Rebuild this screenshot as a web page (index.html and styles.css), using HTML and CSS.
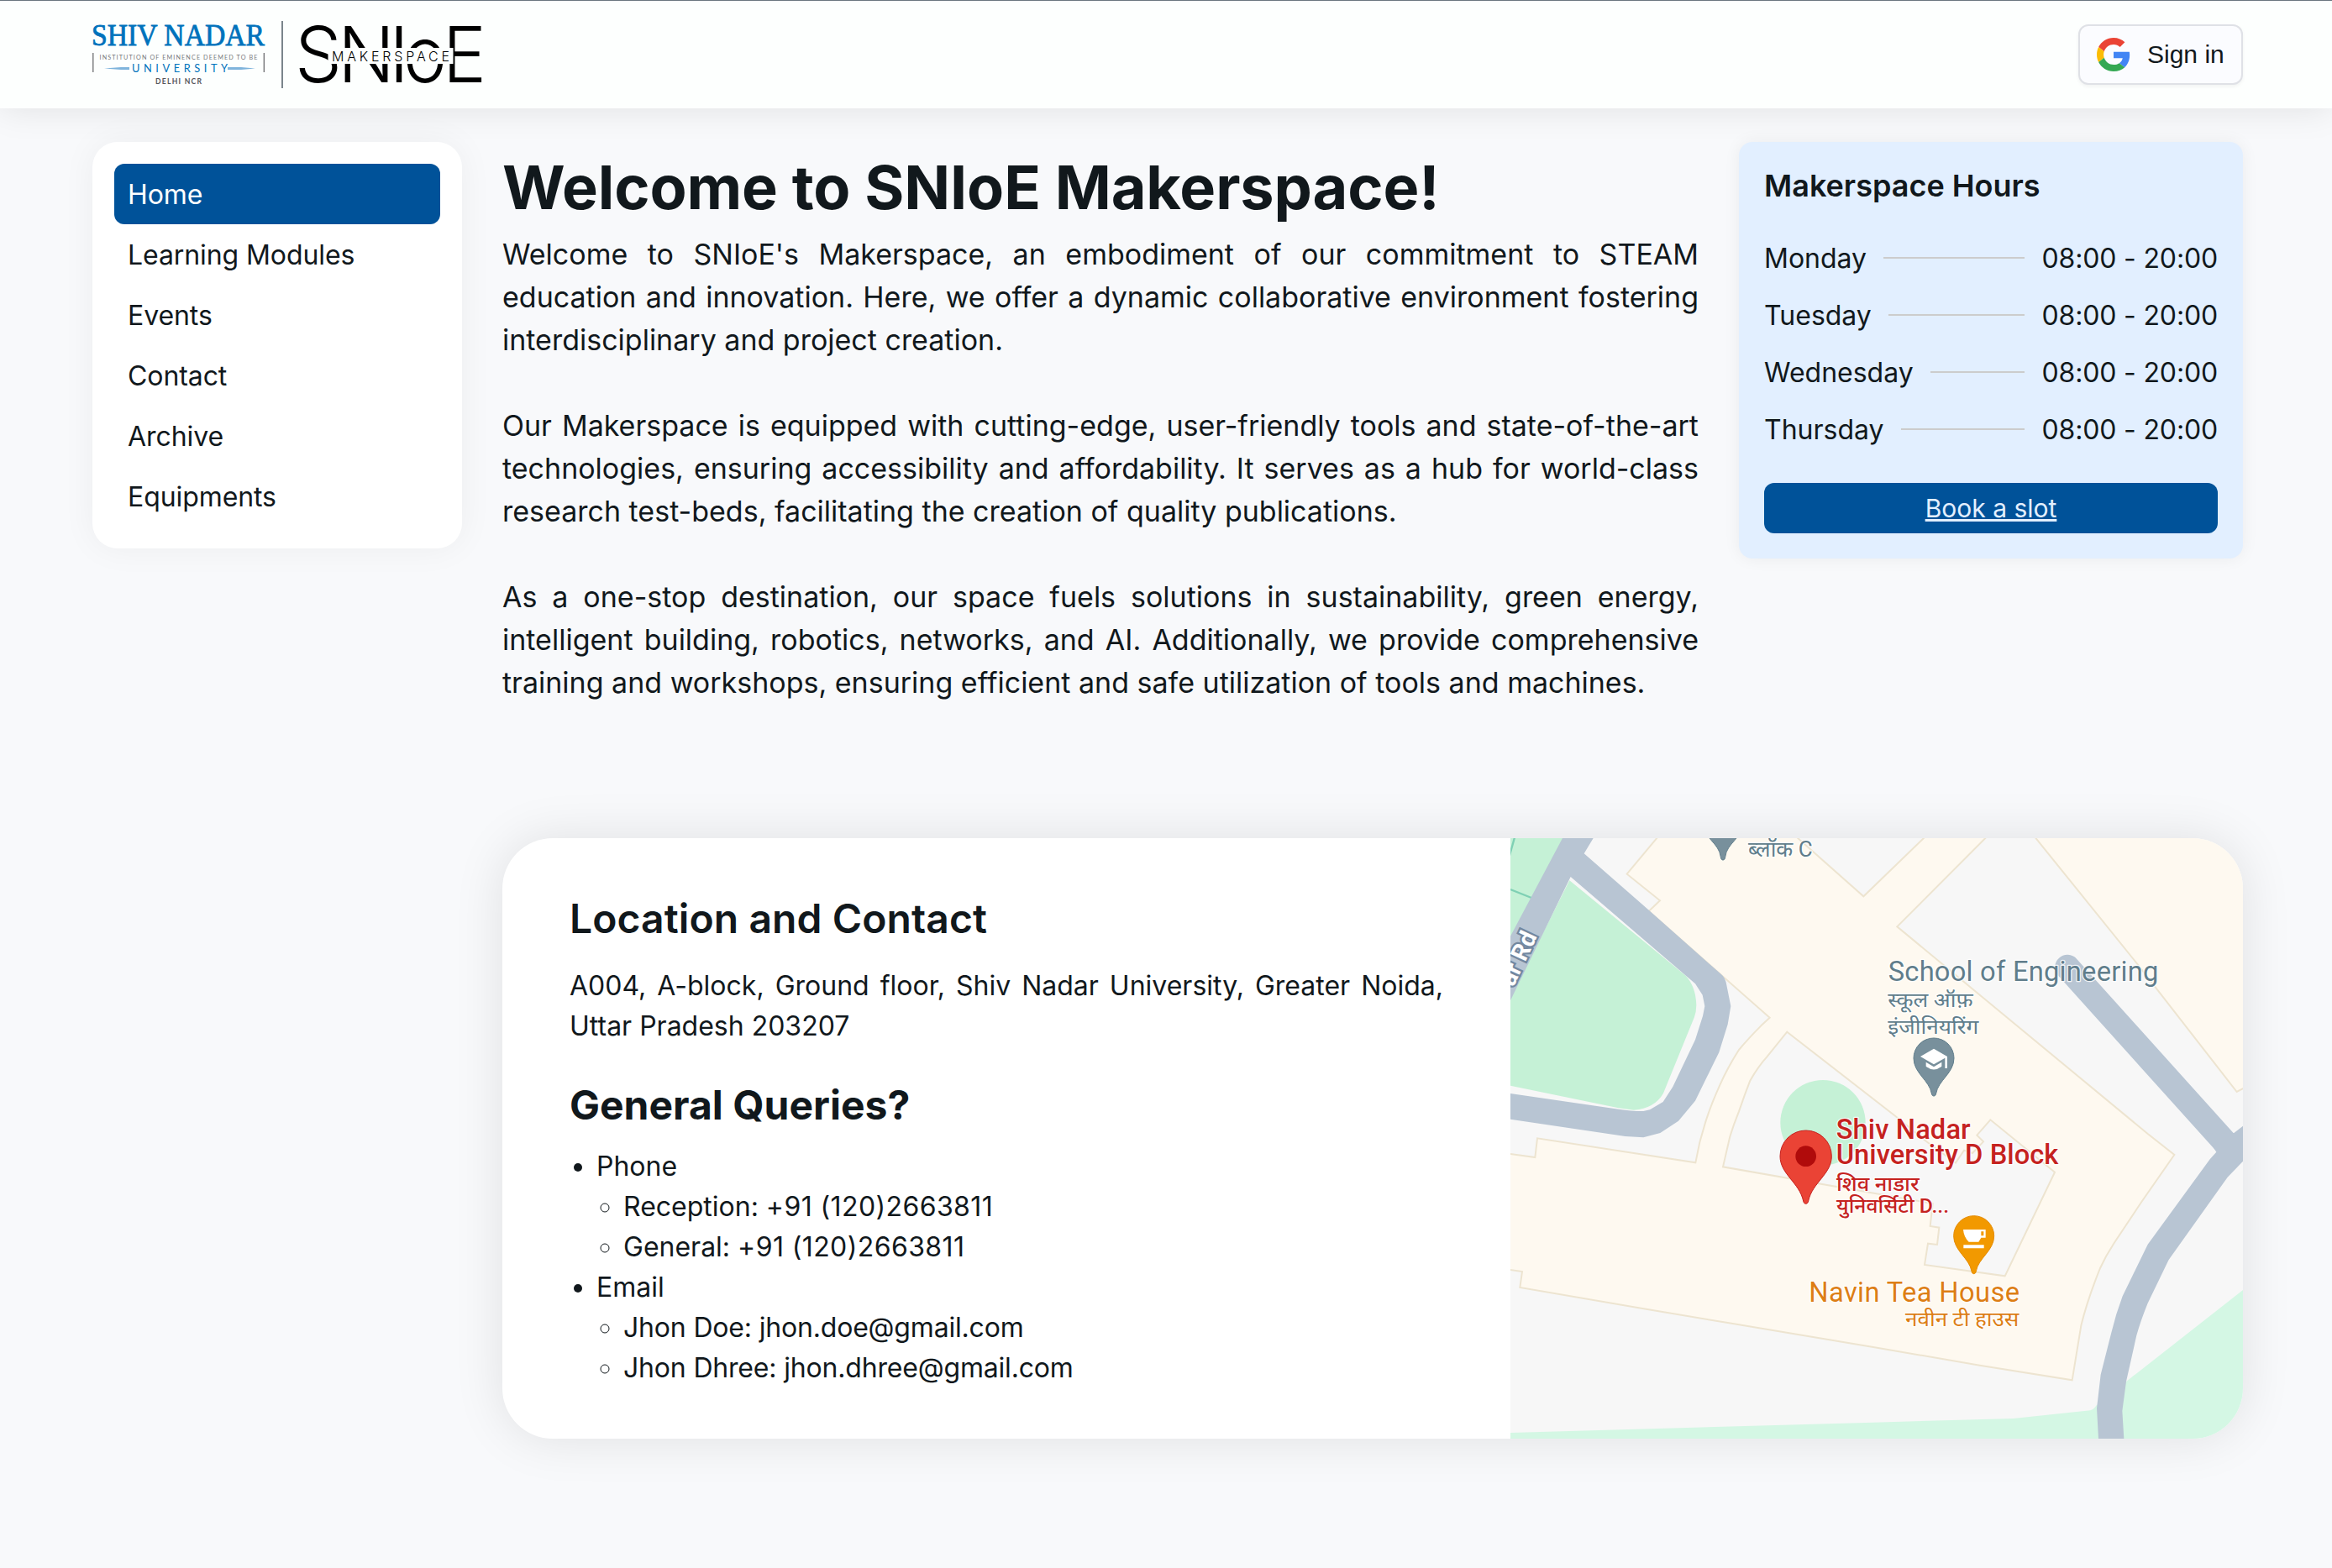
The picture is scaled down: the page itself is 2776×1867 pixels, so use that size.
FILE: index.html
```html
<!DOCTYPE html>
<html lang="en">
<head>
<meta charset="utf-8">
<title>SNIoE Makerspace</title>
<link rel="stylesheet" href="styles.css">
</head>
<body>
<header class="topbar">
  <div class="brand">
    <svg class="logo-university" viewBox="0 0 206 80" role="img" aria-label="Shiv Nadar University">
      <text class="logo-name" x="-1" y="28.500" textLength="206" lengthAdjust="spacingAndGlyphs">SHIV NADAR</text>
      <path class="logo-bracket" d="M.8 38v23M204.300 38v23"/>
      <text class="logo-tag" x="8.500" y="46.200" textLength="188">INSTITUTION OF EMINENCE DEEMED TO BE</text>
      <path class="logo-swash" d="M14 56.500l20-1.600h10v3.200H34zM161 54.900h16l17 1.600-17 1.600h-16z"/>
      <text class="logo-univ" x="47" y="61" textLength="114">UNIVERSITY</text>
      <text class="logo-city" x="75" y="75" textLength="55">DELHI NCR</text>
    </svg>
    <span class="brand-divider"></span>
    <svg class="logo-makerspace" viewBox="0 0 218 80" role="img" aria-label="SNIoE Makerspace">
      <g class="logo-letters">
        <text x="-6" y="73" textLength="56" lengthAdjust="spacingAndGlyphs">S</text>
        <text x="45" y="73" textLength="68" lengthAdjust="spacingAndGlyphs">N</text>
        <text x="106" y="73">I</text>
        <text x="123" y="73" textLength="52" lengthAdjust="spacingAndGlyphs">o</text>
        <text x="170" y="73" textLength="52" lengthAdjust="spacingAndGlyphs">E</text>
      </g>
      <rect class="logo-band" x="33.500" y="32" width="149" height="19"/>
      <text class="logo-sub" x="38" y="48" textLength="140">MAKERSPACE</text>
    </svg>
  </div>
  <button class="signin" type="button">
    <svg class="google" viewBox="0 0 48 48" aria-hidden="true">
      <path fill="#EA4335" d="M24 9.500c3.540 0 6.710 1.220 9.210 3.600l6.850-6.850C35.900 2.380 30.470 0 24 0 14.620 0 6.510 5.380 2.560 13.220l7.980 6.190C12.430 13.720 17.740 9.500 24 9.500z"/>
      <path fill="#4285F4" d="M46.980 24.550c0-1.570-.15-3.090-.38-4.550H24v9.020h12.940c-.58 2.960-2.260 5.480-4.780 7.180l7.730 6c4.510-4.180 7.090-10.360 7.090-17.650z"/>
      <path fill="#FBBC05" d="M10.530 28.590c-.48-1.450-.76-2.990-.76-4.590s.27-3.140.76-4.590l-7.980-6.190C.92 16.460 0 20.120 0 24c0 3.880.92 7.540 2.560 10.780l7.970-6.190z"/>
      <path fill="#34A853" d="M24 48c6.480 0 11.930-2.130 15.890-5.810l-7.730-6c-2.150 1.450-4.920 2.300-8.160 2.300-6.260 0-11.570-4.220-13.470-9.910l-7.980 6.190C6.510 42.620 14.620 48 24 48z"/>
    </svg>
    <span>Sign in</span>
  </button>
</header>

<div class="page">
  <nav class="sidebar">
    <a class="nav-item active">Home</a>
    <a class="nav-item">Learning Modules</a>
    <a class="nav-item">Events</a>
    <a class="nav-item">Contact</a>
    <a class="nav-item">Archive</a>
    <a class="nav-item">Equipments</a>
  </nav>

  <main class="content">
    <div class="intro-row">
      <section class="intro">
        <h1>Welcome to SNIoE Makerspace!</h1>
        <p>Welcome to SNIoE's Makerspace, an embodiment of our commitment to STEAM education and innovation. Here, we offer a dynamic collaborative environment fostering interdisciplinary and project creation.</p>
        <p>Our Makerspace is equipped with cutting-edge, user-friendly tools and state-of-the-art technologies, ensuring accessibility and affordability. It serves as a hub for world-class research test-beds, facilitating the creation of quality publications.</p>
        <p>As a one-stop destination, our space fuels solutions in sustainability, green energy, intelligent building, robotics, networks, and AI. Additionally, we provide comprehensive training and workshops, ensuring efficient and safe utilization of tools and machines.</p>
      </section>
      <aside class="hours">
        <h2>Makerspace Hours</h2>
        <div class="hours-list">
          <div class="hours-row"><span>Monday</span><i></i><span class="time">08:00 - 20:00</span></div>
          <div class="hours-row"><span>Tuesday</span><i></i><span class="time">08:00 - 20:00</span></div>
          <div class="hours-row"><span>Wednesday</span><i></i><span class="time">08:00 - 20:00</span></div>
          <div class="hours-row"><span>Thursday</span><i></i><span class="time">08:00 - 20:00</span></div>
        </div>
        <a class="book">Book a slot</a>
      </aside>
    </div>

    <section class="location">
      <div class="location-text">
        <h2 class="location-title">Location and Contact</h2>
        <p>A004, A-block, Ground floor, Shiv Nadar University, Greater Noida, Uttar Pradesh 203207</p>
        <h2 class="queries-title">General Queries?</h2>
        <ul>
          <li>Phone
            <ul class="phones">
              <li>Reception: <span>+91 (120)2663811</span></li>
              <li>General: <span>+91 (120)2663811</span></li>
            </ul>
          </li>
          <li>Email
            <ul class="emails">
              <li>Jhon Doe: jhon.doe@gmail.com</li>
              <li>Jhon Dhree: jhon.dhree@gmail.com</li>
            </ul>
          </li>
        </ul>
      </div>
      <svg class="map" viewBox="0 0 2616 2145" preserveAspectRatio="none" role="img" aria-label="Map">
        <rect width="2616" height="2145" fill="#f7f7f7"/>
        <!-- lawns -->
        <path fill="#c5f1d6" d="M0 0H190L0 360zM211 151L626 491Q662 530 664 596Q664 620 656 641L546 911Q515 965 441 971L386 964L0 884V570z"/>
        <path class="lawn-line" d="M-4 65L16 -6M0 183L75 213"/>
        <ellipse fill="#c5f1d6" cx="1116" cy="1016" rx="152" ry="152"/>
        <path fill="#d4f7e4" d="M2616 1614L2199 1941L2093 2026Q2082 2042 2071 2044L1796 2073L1296 2087L0 2124V2145H2616z"/>
        <!-- buildings -->
        <path class="building" fill-rule="evenodd" d="M526 -4L416 128L534 223L494 261L926 641L895 670Q850 715 816 756Q775 820 746 886Q715 955 696 1016L676 1086L661 1159L96 1072L88 1140L-6 1127V1541L42 1548L34 1605L476 1681L776 1731L1296 1818L1676 1883L2006 1936L2038 1741Q2060 1650 2106 1536Q2126 1492 2156 1446L2256 1296L2371 1131L2276 1056L1381 316L1700 -4H1480L1261 208L1022 -4z
          M988 692L1376 994L1486 1084L1590 1160L1620 1115L1650 1125L1689 1084L1666 1061L1714 1006L1944 1193L1766 1564L1479 1524L1491 1448L1524 1452L1531 1391L1499 1386L1508 1305L759 1174L784 1066Q798 1020 816 976Q835 920 856 866Q885 815 916 781z"/>
        <path class="building" d="M1873 -4L2236 446L2594 906L2624 890V-8z"/>
        <!-- roads -->
        <path fill="#b8c5d3" d="M186 0H296L263 55L492 255L750 484Q768 498 772 525L787 600L776 665L745 765L660 938L600 1010L535 1053L475 1069L410 1065L0 1004V912L386 968Q440 976 475 975L498 970L545 942L580 888L660 720L687 635L694 600L686 560L660 520L215 138L0 580V350z"/>
        <path fill="none" stroke="#b8c5d3" stroke-width="89" stroke-linecap="round" d="M1989 461L2575 1112"/>
        <path fill="#b8c5d3" d="M2616 1028L2584 1053L2480 1056L2521 1121L2498 1147L2276 1451L2186 1636Q2162 1700 2146 1766L2108 1916L2094 2036L2100 2145H2191L2185 2046L2199 1941L2236 1776Q2250 1725 2276 1661L2351 1506L2561 1211L2616 1154z"/>
        <!-- pins -->
        <g fill="#78909c" stroke="#607d8b" stroke-width="3">
          <path d="M759 78c-4 0-7-3-8-10c-5-52-64-68-64-125a72 72 0 0 1 144 0c0 57-59 73-64 125c-1 7-4 10-8 10z"/>
          <path d="M1512 921c-4 0-7-3-8-9c-7-46-64-73-64-126a72 72 0 0 1 144 0c0 53-57 80-64 126c-1 6-4 9-8 9z"/>
        </g>
        <path fill="#fff" d="M1512 752L1464 780L1512 808L1552 785V822H1560V780zM1484 800V815Q1512 838 1540 815V800L1512 817z"/>
        <path fill="#ea4335" stroke="#c5221f" stroke-width="3" d="M1055 1306c-5 0-8-4-9-10c-14-66-83-96-83-160a92 92 0 0 1 184 0c0 64-69 94-83 160c-1 6-4 10-9 10z"/>
        <circle fill="#b00b0b" cx="1055" cy="1136" r="37"/>
        <path fill="#f29900" stroke="#e58a00" stroke-width="3" d="M1655 1556c-4 0-7-3-8-9c-7-46-64-73-64-126a72 72 0 0 1 144 0c0 53-57 80-64 126c-1 6-4 9-8 9z"/>
        <path fill="#fff" fill-rule="evenodd" d="M1617 1398H1697V1427H1681L1672 1442H1637Q1619 1425 1617 1398zM1681 1405V1420H1690V1405zM1618 1453H1691V1465H1618z"/>
        <!-- labels -->
        <g class="label label-grey">
          <text x="1349" y="511" font-size="98" textLength="965">School of Engineering</text>
          <text x="1348" y="603" font-size="72" textLength="304" lengthAdjust="spacingAndGlyphs">स्कूल ऑफ़</text>
          <text x="1348" y="700" font-size="72" textLength="324" lengthAdjust="spacingAndGlyphs">इंजीनियरिंग</text>
          <text x="849" y="65" font-size="76" textLength="230" lengthAdjust="spacingAndGlyphs">ब्लॉक C</text>
        </g>
        <g class="label label-red">
          <text x="1163" y="1074" font-size="98" textLength="480">Shiv Nadar</text>
          <text x="1163" y="1164" font-size="98" textLength="794">University D Block</text>
          <text x="1164" y="1261" font-size="72" textLength="296" lengthAdjust="spacingAndGlyphs">शिव नाडार</text>
          <text x="1164" y="1339" font-size="72" textLength="402" lengthAdjust="spacingAndGlyphs">युनिवर्सिटी D...</text>
        </g>
        <g class="label label-orange">
          <text x="1066" y="1656" font-size="98" textLength="752">Navin Tea House</text>
          <text x="1410" y="1742" font-size="72" textLength="406" lengthAdjust="spacingAndGlyphs">नवीन टी हाउस</text>
        </g>
        <text class="label-road" font-size="86" text-anchor="end" transform="translate(96 350) rotate(-65)">ar Rd</text>
      </svg>
    </section>
  </main>
</div>
</body>
</html>
```
FILE: styles.css
```css
* { box-sizing: border-box; }

body {
  margin: 0;
  min-height: 1867px;
  background: #f8f9fb;
  color: #11181c;
  font-family: Inter, "Liberation Sans", sans-serif;
  font-size: 32px;
}

h1, h2, p, ul { margin: 0; }

.topbar {
  position: relative;
  z-index: 2;
  display: flex;
  align-items: center;
  justify-content: space-between;
  height: 129px;
  padding: 0 106px 0 110px;
  border-top: 1px solid #6b7680;
  background: #fdfffe;
  box-shadow: 0 0 40px rgba(0, 0, 0, .1);
}

.brand { display: flex; align-items: center; }
.logo-university { width: 206px; height: 80px; overflow: visible; }
.brand-divider { width: 2px; height: 80px; margin: 0 20px 0 19px; background: #7b858c; }
.logo-makerspace { width: 218px; height: 80px; overflow: visible; }

.logo-name { font: 36px "Liberation Serif", serif; fill: #0072bc; stroke: #0072bc; stroke-width: .8; }
.logo-bracket { stroke: #6d6e71; stroke-width: 1.3; }
.logo-tag { font: 7.2px Lato, sans-serif; fill: #77787b; }
.logo-swash { fill: #7fb4dc; }
.logo-univ { font: 12.8px Lato, sans-serif; fill: #0072bc; }
.logo-city { font: bold 8.6px Lato, sans-serif; fill: #55565a; }
.logo-letters { font: 300 92px Inter, sans-serif; fill: #000; }
.logo-band { fill: #fdfffe; }
.logo-sub { font: 300 16px Inter, sans-serif; fill: #000; }

.signin {
  display: flex;
  align-items: center;
  gap: 20px;
  width: 196px;
  height: 72px;
  padding: 0 20px;
  border: 2px solid #dfe1e6;
  border-radius: 12px;
  background: #fbfcff;
  box-shadow: 0 2px 4px rgba(0, 0, 0, .05);
  color: #11181c;
  font: 30px "Liberation Sans", Arial, sans-serif;
  white-space: nowrap;
}
.google { flex: none; width: 40px; height: 40px; }

.page {
  display: flex;
  align-items: flex-start;
  gap: 48px;
  padding: 40px 106px 0 110px;
}

.sidebar {
  flex: none;
  width: 440px;
  padding: 26px;
  border-radius: 30px;
  background: #fff;
  box-shadow: 0 0 40px rgba(0, 0, 0, .05);
}
.nav-item {
  display: flex;
  align-items: center;
  height: 72px;
  padding: 0 16px;
  border-radius: 12px;
  letter-spacing: -.08px;
}
.nav-item.active { background: #005299; color: #fff; }

.content { flex: none; width: 2072px; }
.intro-row { display: flex; align-items: flex-start; gap: 48px; height: 829px; }
.intro { width: 1424px; }
.intro h1 { font-size: 72px; font-weight: 700; line-height: 108px; letter-spacing: -.12px; }
.intro p { margin-bottom: 51px; font-size: 34px; line-height: 51px; text-align: justify; }

.hours {
  width: 600px;
  padding: 30px;
  border-radius: 16px;
  background: #e2efff;
  box-shadow: 0 0 20px rgba(0, 0, 0, .06);
}
.hours h2 { font-size: 36px; font-weight: 600; line-height: 44px; }
.hours-list { padding: 30px 0; }
.hours-row { display: flex; align-items: center; gap: 20px; height: 68px; }
.hours-row i { flex: 1; height: 2px; background: #ccc; }
.hours-row .time { letter-spacing: -.16px; }
.book {
  display: flex;
  align-items: center;
  justify-content: center;
  height: 60px;
  border-radius: 12px;
  background: #005299;
  color: #e2efff;
  font-size: 30px;
  text-decoration: underline;
}

.location {
  display: flex;
  height: 715px;
  overflow: hidden;
  border-radius: 60px;
  background: #fff;
  box-shadow: 0 0 60px rgba(0, 0, 0, .1);
}
.location-text { width: 1200px; padding: 60px 80px; line-height: 48px; }
.location-text h2 { font-size: 48px; line-height: 72px; }
.location-text .location-title { font-weight: 600; letter-spacing: .1px; }
.location-text p { margin: 20px 0 34px; text-align: justify; }
.location-text .queries-title { font-weight: 700; margin-bottom: 13px; }
.location-text ul { padding-left: 32px; }
.phones span { letter-spacing: .4px; }
.emails { letter-spacing: -.18px; }

.map { display: block; width: 872px; height: 715px; }
.lawn-line { fill: none; stroke: #7fd0b4; stroke-width: 7; }
.building { fill: #fef9f0; stroke: #ede4d0; stroke-width: 6; }
.label { font-family: Roboto, "Noto Sans", sans-serif; stroke-width: 8; paint-order: stroke; stroke: rgba(255, 255, 255, .8); stroke-linejoin: round; }
.label-grey { fill: #607d8b; }
.label-red { fill: #c5221f; font-weight: 500; }
.label-orange { fill: #dd7e14; }
.label-road { font-family: Roboto, sans-serif; font-weight: 700; fill: #fff; stroke: #7388a0; stroke-width: 14; paint-order: stroke; }
```
